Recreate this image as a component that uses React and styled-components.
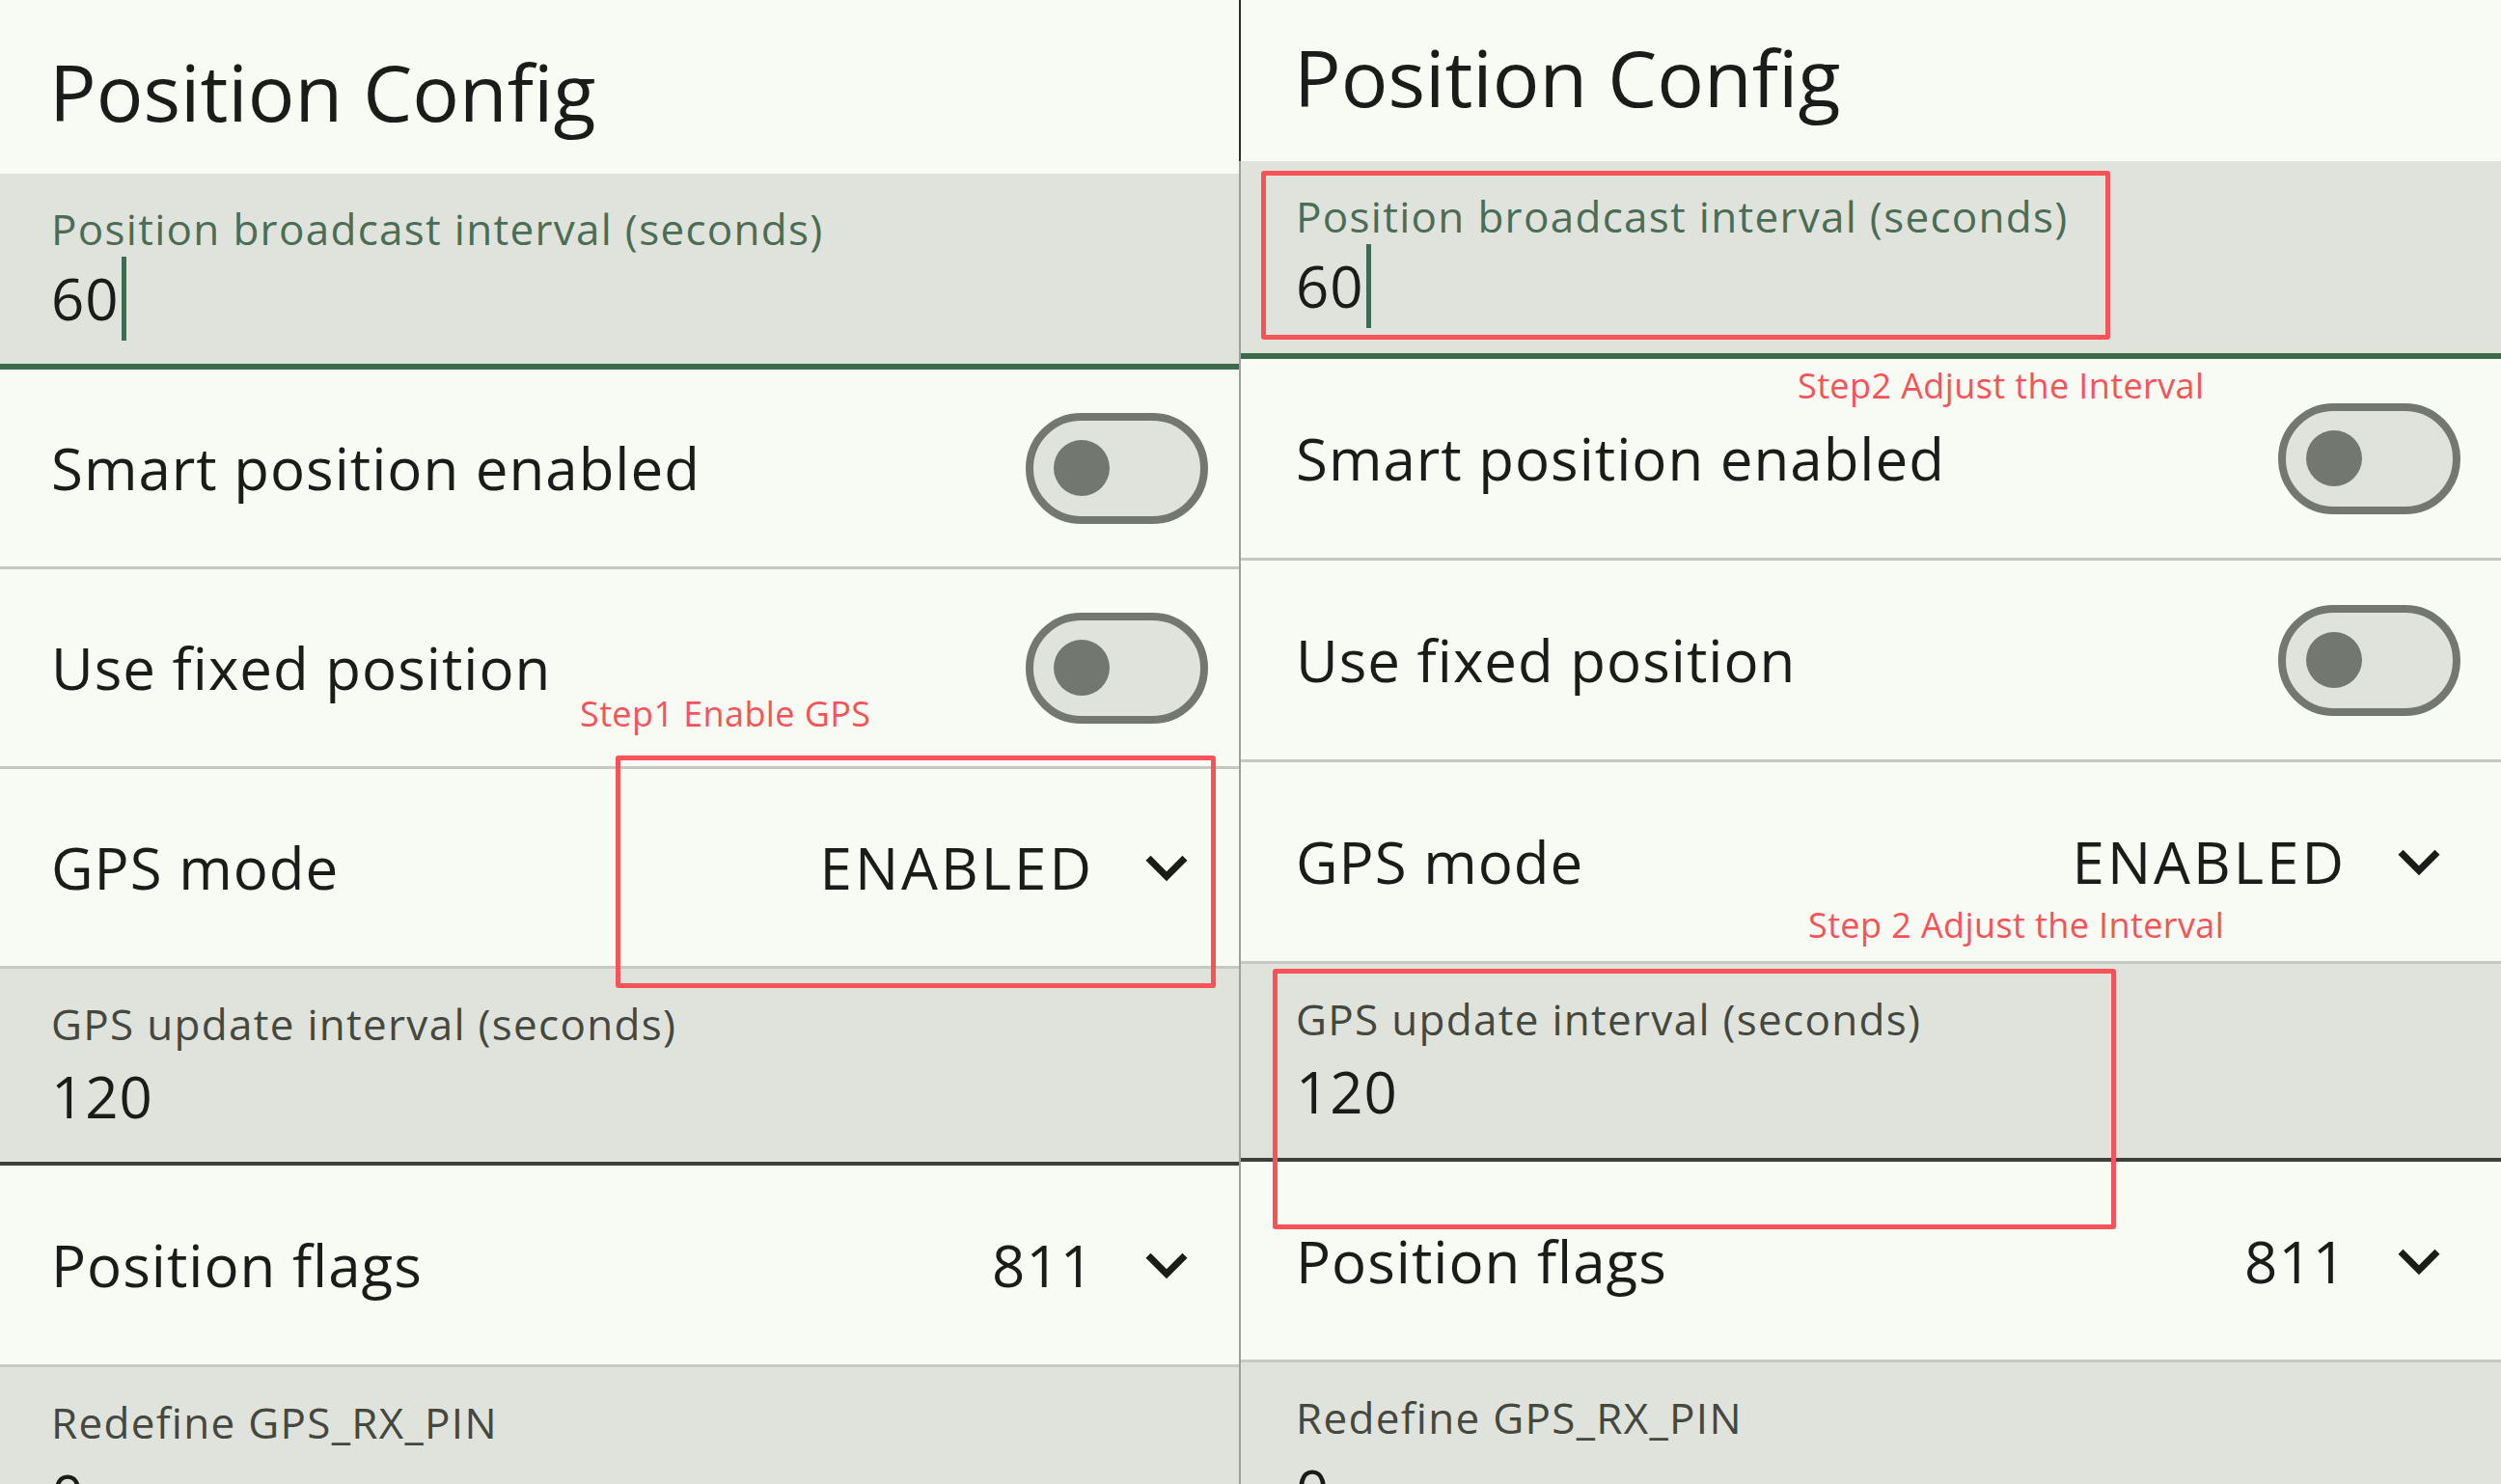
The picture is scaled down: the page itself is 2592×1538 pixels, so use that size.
import styled, { createGlobalStyle } from "styled-components";

const GlobalStyle = createGlobalStyle`
  html, body {
    margin: 0;
    padding: 0;
    background: #f8faf4;
  }
  * {
    box-sizing: border-box;
  }
`;

const Page = styled.div`
  display: flex;
  height: 1538px;
  overflow: hidden;
  background: #f8faf4;
  font-family: "Open Sans", "Noto Sans", sans-serif;
  color: #1a1c19;
`;

const Panel = styled.section`
  position: relative;
  display: flex;
  flex-direction: column;
  flex: ${(p) => (p.$grow ? "1 1 auto" : "0 0 1284px")};
  min-width: 0;
  --pad-l: ${(p) => p.$padL}px;
  --pad-r: ${(p) => p.$padR}px;
`;

const Divider = styled.div`
  flex: 0 0 2px;
  background: linear-gradient(#2b2d2a 0 167px, #9d9f9b 167px);
`;

const Header = styled.header`
  height: ${(p) => p.$h}px;
  padding: ${(p) => p.$top}px var(--pad-r) 0 var(--pad-l);
  flex-shrink: 0;
`;

const Title = styled.h1`
  margin: 0 0 0 -2px;
  font-size: 81px;
  font-weight: 400;
  line-height: 1;
  color: #1a1c19;
`;

const Field = styled.div`
  flex-shrink: 0;
  height: ${(p) => p.$h}px;
  box-sizing: content-box;
  padding: 35px var(--pad-r) 0 var(--pad-l);
  background: #e0e3dc;
  border-bottom: ${(p) =>
    p.$focused ? "6px solid #3d6a4b" : "4px solid #3c403a"};
`;

const FieldLabel = styled.div`
  font-size: 44px;
  line-height: 1;
  letter-spacing: 1.3px;
  color: ${(p) => (p.$focused ? "#4a6d54" : "#44483f")};
`;

const FieldValue = styled.div`
  display: flex;
  align-items: center;
  height: 60px;
  margin-top: ${(p) => p.$gap ?? 20}px;
  font-size: 60px;
  line-height: 1;
  letter-spacing: 1px;
  color: #1a1c19;
`;

const Caret = styled.span`
  flex-shrink: 0;
  width: 5px;
  height: 87px;
  margin-left: 2px;
  background: #3f6b52;
`;

const Row = styled.div`
  flex-shrink: 0;
  display: flex;
  align-items: center;
  justify-content: space-between;
  height: ${(p) => p.$h}px;
  box-sizing: content-box;
  padding: 0 var(--pad-r) 0 var(--pad-l);
  border-bottom: 3px solid #c6c9c2;
  font-size: 60px;
  line-height: 1;
  letter-spacing: 1px;
`;

const Switch = styled.div`
  flex-shrink: 0;
  display: flex;
  align-items: center;
  width: 189px;
  height: 115px;
  padding-left: 21px;
  border: 8px solid #72786f;
  border-radius: 58px;
  background: #e0e3dc;
`;

const Knob = styled.div`
  width: 58px;
  height: 58px;
  border-radius: 50%;
  background: #72786f;
`;

const Select = styled.div`
  display: flex;
  align-items: center;
  gap: 32px;
  svg {
    display: block;
  }
`;

const SelectValue = styled.span`
  letter-spacing: ${(p) => p.$spacing}px;
`;

const Mark = styled.div`
  position: absolute;
  left: ${(p) => p.$x}px;
  top: ${(p) => p.$y}px;
  width: ${(p) => p.$w}px;
  height: ${(p) => p.$h}px;
  border: 5px solid #f65358;
  border-radius: 3px;
  pointer-events: none;
`;

const Note = styled.span`
  position: absolute;
  left: ${(p) => p.$x}px;
  top: ${(p) => p.$y}px;
  font-size: 36px;
  line-height: 1;
  letter-spacing: 0.4px;
  white-space: nowrap;
  color: #f65358;
`;

const Chevron = () => (
  <svg width="86" height="86" viewBox="0 0 24 24">
    <path
      d="M7.41 8.59 12 13.17l4.59-4.58L18 10l-6 6-6-6z"
      fill="#1a1c19"
    />
  </svg>
);

const ConfigScreen = ({ layout, children, grow }) => (
  <Panel $grow={grow} $padL={layout.padL} $padR={layout.padR}>
    <Header $h={layout.headerH} $top={layout.titleTop}>
      <Title>Position Config</Title>
    </Header>
    <Field $focused $h={layout.fieldH}>
      <FieldLabel $focused>Position broadcast interval (seconds)</FieldLabel>
      <FieldValue>
        60
        <Caret />
      </FieldValue>
    </Field>
    <Row $h={layout.rowH}>
      Smart position enabled
      <Switch>
        <Knob />
      </Switch>
    </Row>
    <Row $h={layout.rowH}>
      Use fixed position
      <Switch>
        <Knob />
      </Switch>
    </Row>
    <Row $h={layout.rowH}>
      GPS mode
      <Select>
        <SelectValue $spacing={3}>ENABLED</SelectValue>
        <Chevron />
      </Select>
    </Row>
    <Field $h={layout.field2H}>
      <FieldLabel>GPS update interval (seconds)</FieldLabel>
      <FieldValue $gap={23}>120</FieldValue>
    </Field>
    <Row $h={layout.flagsH}>
      Position flags
      <Select>
        <SelectValue $spacing={1}>811</SelectValue>
        <Chevron />
      </Select>
    </Row>
    <Field $h={layout.field2H}>
      <FieldLabel>Redefine GPS_RX_PIN</FieldLabel>
      <FieldValue $gap={23}>0</FieldValue>
    </Field>
    {children}
  </Panel>
);

const leftLayout = {
  padL: 53,
  padR: 32,
  headerH: 180,
  titleTop: 54,
  fieldH: 162,
  field2H: 165,
  rowH: 204,
  flagsH: 206,
};

const rightLayout = {
  padL: 57,
  padR: 42,
  headerH: 167,
  titleTop: 39,
  fieldH: 164,
  field2H: 166,
  rowH: 206,
  flagsH: 205,
};

const App = () => (
  <>
    <GlobalStyle />
    <Page>
      <ConfigScreen layout={leftLayout}>
        <Note $x={601} $y={722}>
          Step1 Enable GPS
        </Note>
        <Mark $x={638} $y={783} $w={622} $h={241} />
      </ConfigScreen>
      <Divider />
      <ConfigScreen layout={rightLayout} grow>
        <Mark $x={21} $y={177} $w={880} $h={175} />
        <Note $x={577} $y={382}>
          Step2 Adjust the Interval
        </Note>
        <Note $x={588} $y={941}>
          Step 2 Adjust the Interval
        </Note>
        <Mark $x={33} $y={1004} $w={874} $h={270} />
      </ConfigScreen>
    </Page>
  </>
);

export default App;
